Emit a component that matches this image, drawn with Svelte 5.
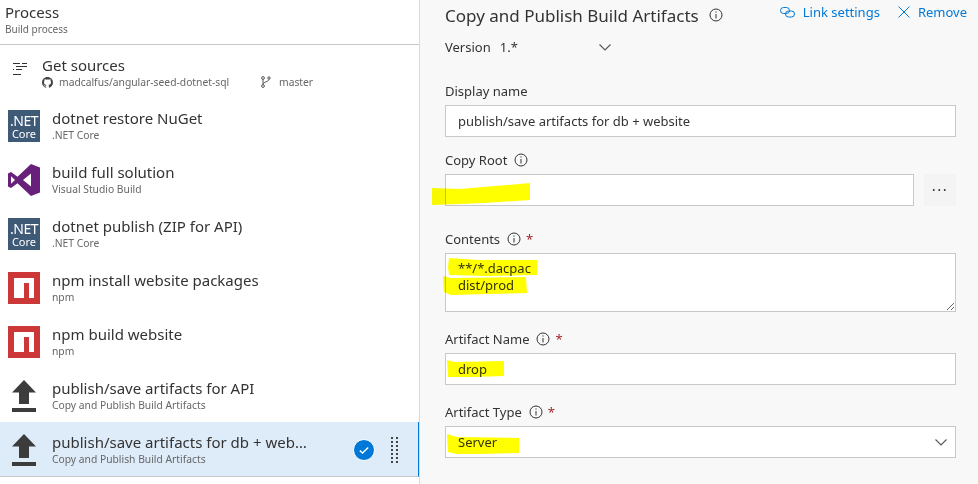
<script>
    const tasks = [
        { icon: 'net', name: 'dotnet restore NuGet', sub: '.NET Core' },
        { icon: 'vs', name: 'build full solution', sub: 'Visual Studio Build' },
        { icon: 'net', name: 'dotnet publish (ZIP for API)', sub: '.NET Core' },
        { icon: 'npm', name: 'npm install website packages', sub: 'npm' },
        { icon: 'npm', name: 'npm build website', sub: 'npm' },
        { icon: 'up', name: 'publish/save artifacts for API', sub: 'Copy and Publish Build Artifacts' },
        { icon: 'up', name: 'publish/save artifacts for db + website', sub: 'Copy and Publish Build Artifacts', selected: true }
    ];
</script>

{#snippet info()}
    <svg class="info" width="14" height="14" viewBox="0 0 14 14" fill="none" stroke="#333" stroke-width="1">
        <circle cx="7" cy="7" r="6" />
        <path d="M7 6v4.5M7 3.4v1.2" />
    </svg>
{/snippet}

{#snippet chevron()}
    <svg width="12" height="7" viewBox="0 0 12 7" fill="none" stroke="#555" stroke-width="1.1">
        <path d="M.5.5 6 6l5.5-5.5" />
    </svg>
{/snippet}

<div class="page">
    <aside class="process">
        <header class="head">
            <h1>Process</h1>
            <p>Build process</p>
        </header>

        <div class="sources">
            <svg class="src-icon" width="14" height="12" viewBox="0 0 14 12" stroke="#333" stroke-width="1" fill="none">
                <path d="M0 .5h7M9 .5h5M3 3.5h11M3 6.5h6M0 6.5h1M0 11.5h8" />
            </svg>
            <div class="src-text">
                <div class="name">Get sources</div>
                <div class="src-meta">
                    <svg width="11" height="11" viewBox="0 0 16 16" fill="#444">
                        <path d="M8 0C3.6 0 0 3.6 0 8c0 3.5 2.3 6.5 5.5 7.6.4.1.5-.2.5-.4v-1.4c-2.2.5-2.7-1-2.7-1-.4-.9-.9-1.2-.9-1.2-.7-.5.1-.5.1-.5.8.1 1.2.8 1.2.8.7 1.2 1.9.9 2.3.7.1-.5.3-.9.5-1.1-1.8-.2-3.6-.9-3.6-4 0-.9.3-1.6.8-2.1-.1-.2-.4-1 .1-2.1 0 0 .7-.2 2.2.8.6-.2 1.3-.3 2-.3s1.4.1 2 .3c1.5-1 2.2-.8 2.2-.8.4 1.1.2 1.9.1 2.1.5.6.8 1.3.8 2.1 0 3.1-1.9 3.7-3.7 3.9.3.3.6.8.6 1.5v2.2c0 .2.1.5.6.4C13.7 14.5 16 11.5 16 8c0-4.4-3.6-8-8-8z" />
                    </svg>
                    <span class="repo">madcalfus/angular-seed-dotnet-sql</span>
                    <svg class="branch" width="10" height="12" viewBox="0 0 10 12" fill="none" stroke="#555" stroke-width="1">
                        <circle cx="2" cy="2" r="1.4" />
                        <circle cx="2" cy="10" r="1.4" />
                        <circle cx="8" cy="2" r="1.2" />
                        <path d="M2 3.4v5.2M8 3.2C8 6 2.4 5.5 2 8.5" />
                    </svg>
                    <span>master</span>
                </div>
            </div>
        </div>

        {#each tasks as task}
            <div class="task" class:selected={task.selected}>
                <div class="icon">
                    {#if task.icon === 'net'}
                        <div class="net"><span class="net-a">.NET</span><span class="net-b">Core</span></div>
                    {:else if task.icon === 'vs'}
                        <svg width="32" height="32" viewBox="0 0 32 32">
                            <path fill="#68217a" d="M23 0l9 3.6v24.8L23 32 9.5 19.2 3 24l-3-1.5v-13L3 8l6.5 4.8zM3 12.2v7.6l4-3.8zM23 9.5 15 16l8 6.5z" fill-rule="evenodd" />
                        </svg>
                    {:else if task.icon === 'npm'}
                        <svg width="32" height="32" viewBox="0 0 32 32">
                            <path fill="#cb3837" d="M0 0h32v32H0z" />
                            <path fill="#fff" d="M6 6h20v20h-5V11h-5v15H6z" />
                        </svg>
                    {:else}
                        <svg width="32" height="32" viewBox="0 0 32 32">
                            <path fill="#3c3c3c" d="M16 0 28 12.5h-7V24h-10V12.5H4zM4 28h24v4H4z" />
                        </svg>
                    {/if}
                </div>
                <div class="text">
                    <div class="name">{task.name}</div>
                    <div class="sub">{task.sub}</div>
                </div>
                {#if task.selected}
                    <svg class="check" width="22" height="22" viewBox="0 0 22 22">
                        <circle cx="11" cy="11" r="10.5" fill="#0078d7" stroke="#fff" />
                        <path d="M6.8 11.4 9.5 14l5.7-5.6" fill="none" stroke="#fff" stroke-width="1.4" />
                    </svg>
                    <div class="grip">
                        {#each Array(14) as _}<i></i>{/each}
                    </div>
                {/if}
            </div>
        {/each}
    </aside>

    <main class="detail">
        <div class="title-row">
            <h2>Copy and Publish Build Artifacts</h2>
            {@render info()}
            <div class="actions">
                <span class="action">
                    <svg width="15" height="11" viewBox="0 0 15 11" fill="none" stroke="#0078d7" stroke-width="1">
                        <rect x=".5" y=".5" width="9" height="6" rx="3" />
                        <rect x="5.5" y="4" width="9" height="6" rx="3" />
                    </svg>
                    Link settings
                </span>
                <span class="action">
                    <svg width="12" height="12" viewBox="0 0 12 12" fill="none" stroke="#0078d7" stroke-width="1">
                        <path d="M.5.5l11 11M11.5.5l-11 11" />
                    </svg>
                    Remove
                </span>
            </div>
        </div>

        <div class="version">
            <span>Version</span>
            <span class="version-num">1.*</span>
            {@render chevron()}
        </div>

        <div class="field first">
            <div class="label">Display name</div>
            <div class="input">publish/save artifacts for db + website</div>
        </div>

        <div class="field">
            <div class="label">Copy Root {@render info()}</div>
            <div class="root-row">
                <div class="input"></div>
                <div class="more">···</div>
            </div>
        </div>

        <div class="field contents">
            <div class="label">Contents {@render info()} <span class="req">*</span></div>
            <div class="input area">
                <div>**/*.dacpac</div>
                <div>dist/prod</div>
                <svg class="resize" width="8" height="8" viewBox="0 0 8 8" stroke="#666" stroke-width="1">
                    <path d="M1 8 8 1M5 8l3-3" />
                </svg>
            </div>
        </div>

        <div class="field spaced">
            <div class="label">Artifact Name {@render info()} <span class="req">*</span></div>
            <div class="input">drop</div>
        </div>

        <div class="field spaced">
            <div class="label">Artifact Type {@render info()} <span class="req">*</span></div>
            <div class="input select">Server {@render chevron()}</div>
        </div>
    </main>

    <!-- hand drawn highlighter marks on top of the shot -->
    <svg class="marks" width="978" height="484" viewBox="0 0 978 484">
        <path d="M432 188l28 1 35-3 35-3v17l-45 3-25 1-28 1z" />
        <path d="M449 258l30 2 58 0v15l-50 1-38-1-1-8z" />
        <path d="M443 276l8 2 75-1 1 16-40 1-36 1-7-3z" />
        <path d="M447 360l8 2 49-1v15l-30 1-26 0z" />
        <path d="M447 434l10 3 62 1v15l-40 1-22 0-9-2z" />
    </svg>
</div>

<style>
    :global(body) {
        margin: 0;
        background: #f8f8f8;
    }

    .page {
        position: relative;
        width: 978px;
        height: 484px;
        display: flex;
        overflow: hidden;
        font-family: "Noto Sans", "Open Sans", sans-serif;
        color: #333;
    }

    .process {
        width: 420px;
        flex: none;
        box-sizing: border-box;
        background: #fff;
        border-right: 1px solid #dadada;
    }

    .head {
        height: 45px;
        box-sizing: border-box;
        padding: 3px 0 0 5px;
        border-bottom: 1px solid #c8c8c8;
    }

    h1 {
        margin: 0;
        font-size: 15px;
        font-weight: 400;
        line-height: 19px;
    }

    .head p {
        margin: 0;
        font-size: 10px;
        line-height: 14px;
        color: #666;
    }

    .sources {
        display: flex;
        height: 54px;
        box-sizing: border-box;
        padding: 10px 0 0 13px;
    }

    .src-icon {
        margin-top: 8px;
        flex: none;
    }

    .src-text {
        margin-left: 15px;
    }

    .src-meta {
        display: flex;
        align-items: center;
        gap: 6px;
        font-size: 10.3px;
        line-height: 14px;
        color: #666;
    }

    .repo {
        width: 196px;
        white-space: nowrap;
    }

    .branch {
        margin-right: 2px;
    }

    .name {
        font-size: 15px;
        line-height: 20px;
        white-space: nowrap;
    }

    .task {
        display: flex;
        align-items: center;
        height: 54px;
        box-sizing: border-box;
        padding-left: 8px;
    }

    .task.selected {
        margin-top: -1px;
        height: 55px;
        padding-top: 2px;
        background: #deecf9;
        border-right: 1px solid #0078d7;
        border-bottom: 1px solid #c8c8c8;
    }

    .icon {
        width: 32px;
        height: 32px;
        flex: none;
    }

    .icon svg {
        display: block;
    }

    .net {
        width: 32px;
        height: 32px;
        background: #3e5a77;
        color: #fff;
        display: flex;
        flex-direction: column;
        align-items: center;
        padding-top: 4px;
        box-sizing: border-box;
    }

    .net-a {
        font-size: 14px;
        line-height: 14px;
        letter-spacing: -0.5px;
    }

    .net-b {
        font-size: 11px;
        line-height: 12px;
    }

    .text {
        margin: -2px 0 0 12px;
        min-width: 0;
        width: 258px;
    }

    .selected .name {
        overflow: hidden;
        text-overflow: ellipsis;
    }

    .sub {
        font-size: 10.3px;
        line-height: 14px;
        color: #666;
        white-space: nowrap;
    }

    .check {
        margin-left: 43px;
        flex: none;
    }

    .grip {
        margin-left: 16px;
        display: grid;
        grid-template-columns: 2px 2px;
        gap: 2px 3px;
    }

    .grip i {
        width: 2px;
        height: 2px;
        background: #444;
    }

    .detail {
        flex: 1;
        padding: 0 22px 0 25px;
        min-width: 0;
    }

    .title-row {
        display: flex;
        align-items: center;
        height: 30px;
        gap: 10px;
    }

    h2 {
        margin: 0;
        font-size: 17px;
        font-weight: 400;
        white-space: nowrap;
    }

    .actions {
        margin-left: auto;
        margin-right: -11px;
        margin-top: -6px;
        display: flex;
        gap: 18px;
        color: #0078d7;
        font-size: 13px;
    }

    .action {
        display: flex;
        align-items: center;
        gap: 8px;
    }

    .version {
        display: flex;
        align-items: center;
        font-size: 13px;
        height: 18px;
        margin-top: 8px;
    }

    .version-num {
        margin-left: 9px;
        width: 99px;
    }

    .field {
        margin-top: 14px;
    }

    .field.first {
        margin-top: 26px;
    }

    .label {
        display: flex;
        align-items: center;
        gap: 7px;
        height: 18px;
        font-size: 13px;
        margin-bottom: 5px;
    }

    .req {
        margin-left: -2px;
        color: #a4262c;
    }

    .input {
        box-sizing: border-box;
        height: 32px;
        border: 1px solid #c8c8c8;
        background: #fff;
        padding: 0 12px;
        font-size: 13px;
        line-height: 30px;
    }

    .root-row {
        display: flex;
    }

    .root-row .input {
        width: 469px;
    }

    .more {
        margin-left: 10px;
        width: 32px;
        height: 32px;
        background: #f4f4f4;
        text-align: center;
        font-size: 15px;
        line-height: 30px;
        letter-spacing: 1.5px;
    }

    .contents {
        margin-top: 24px;
    }

    .area {
        position: relative;
        height: 59px;
        line-height: 17px;
        padding-top: 6px;
    }

    .resize {
        position: absolute;
        right: 1px;
        bottom: 1px;
    }

    .spaced {
        margin-top: 18px;
    }

    .select {
        display: flex;
        align-items: center;
        justify-content: space-between;
        padding-right: 8px;
    }

    .marks {
        position: absolute;
        inset: 0;
        pointer-events: none;
        mix-blend-mode: multiply;
    }

    .marks path {
        fill: #ffff00;
    }
</style>
